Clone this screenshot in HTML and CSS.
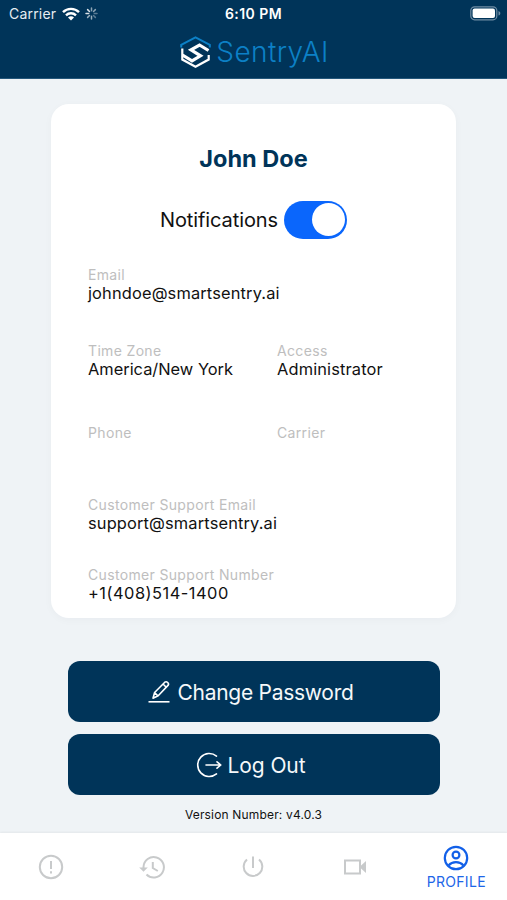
FILE: index.html
```html
<!DOCTYPE html>
<html lang="en">
<head>
<meta charset="utf-8">
<title>Profile</title>
<link rel="stylesheet" href="styles.css">
</head>
<body>
<header class="header">
  <div class="status">
    <div class="status-left">
      <span class="carrier">Carrier</span>
      <svg class="wifi" width="18" height="14" viewBox="0 0 18 14" fill="none" stroke="#fff" stroke-width="2.4"><path d="M1 5.200C5.400.7 12.600.7 17 5.200M4 8.300c2.800-2.700 7.200-2.700 10 0"/><path d="M9 13.500l-3-3.100c1.700-1.500 4.300-1.500 6 0z" fill="#fff" stroke="none"/></svg>
      <svg class="spinner" width="13" height="13" viewBox="-6.5 -6.5 13 13" stroke="#fff" stroke-width="1.5" stroke-linecap="round"><path opacity=".55" d="M0-2.800V-5.500M2-2l1.900-1.900"/><path opacity=".35" d="M2.800 0h2.700M2 2l1.900 1.900"/><path opacity=".6" d="M0 2.800v2.700M-2 2l-1.900 1.900"/><path opacity=".85" d="M-2.800 0h-2.700M-2-2l-1.900-1.900"/></svg>
    </div>
    <span class="time">6:10 PM</span>
    <div class="status-right">
      <svg width="31" height="15" viewBox="0 0 31 15"><rect x=".8" y=".8" width="26" height="13" rx="3.8" fill="none" stroke="#6f8ca4" stroke-width="1.2"/><rect x="2.6" y="2.6" width="22.4" height="9.4" rx="2" fill="#fff"/><path d="M28.500 5c2.400.8 2.400 3.800 0 4.600z" fill="#6f8ca4"/></svg>
    </div>
  </div>
  <div class="brand">
    <svg width="31" height="33" viewBox="0 0 31 33" fill="none"><path d="M2.300 12.500V23.500l13.200 7.300 13.200-7.300V19" stroke="#fff" stroke-width="2.200"/><path d="M1.200 11.500V8.800L15.500 1.300l14.300 7.500v2.700" stroke="#0c80c6" stroke-width="2"/><path d="M28.500 14.500L19.500 9 11 13.800l9.500 6L12 24.800 2.500 19" stroke="#fff" stroke-width="3.200"/></svg>
    <span class="brand-name">SentryAI</span>
  </div>
</header>
<main class="main">
  <section class="card">
    <h1 class="name">John Doe</h1>
    <div class="notify"><span class="notify-label">Notifications</span><span class="toggle"><span class="knob"></span></span></div>
    <dl class="fields">
      <div class="field wide"><dt>Email</dt><dd>johndoe@smartsentry.ai</dd></div>
      <div class="field"><dt>Time Zone</dt><dd class="zone">America/New York</dd></div>
      <div class="field"><dt>Access</dt><dd>Administrator</dd></div>
      <div class="field"><dt>Phone</dt></div>
      <div class="field"><dt>Carrier</dt></div>
      <div class="field wide"><dt>Customer Support Email</dt><dd>support@smartsentry.ai</dd></div>
      <div class="field wide"><dt>Customer Support Number</dt><dd class="number">+1(408)514-1400</dd></div>
    </dl>
  </section>
  <div class="actions">
    <button class="btn"><svg width="24" height="24" viewBox="0 0 24 24" fill="none" stroke="#fff" stroke-width="1.600" stroke-linejoin="round"><path d="M1.500 21.800h21" stroke-width="1.600"/><path d="M6 18.200l1.600-5.700L17.800 2.200q1.400-1.100 2.900.3t.3 2.900L11.200 15.800zM16.300 4.200l2.900 3M7.800 12.800l3 3"/></svg><span class="change">Change Password</span></button>
    <button class="btn"><svg width="26" height="26" viewBox="0 0 26 26" fill="none" stroke="#fff" stroke-width="1.600" stroke-linecap="round" stroke-linejoin="round"><path d="M20.500 4.100A11.500 11.500 0 1 0 20.500 21.900M10 13h14M21 9.800L24.800 13 21 16.200"/></svg><span class="logout">Log Out</span></button>
  </div>
  <p class="version">Version Number: v4.0.3</p>
</main>
<nav class="tabs">
  <a class="tab"><svg width="26" height="26" viewBox="0 0 26 26" fill="none" stroke="#c8cacb" stroke-width="2"><circle cx="13" cy="13" r="11.200"/><path d="M13 7v8M13 17.300v2.200"/></svg></a>
  <a class="tab"><svg width="26" height="26" viewBox="0 0 26 26" fill="none" stroke="#c8cacb" stroke-width="2"><path d="M4.500 14.500V13A10.200 10.200 0 1 1 7.500 20.500M13.800 8v6l5 3"/><path d="M.2 13.500h8.600l-4.300 4.300z" fill="#c8cacb" stroke="none"/></svg></a>
  <a class="tab"><svg width="26" height="26" viewBox="0 0 26 26" fill="none" stroke="#c8cacb" stroke-width="2"><path d="M13 2.500v11.500M7 5.500a9.300 9.300 0 1 0 12 0"/></svg></a>
  <a class="tab"><svg width="26" height="26" viewBox="0 0 26 26" fill="none" stroke="#c8cacb" stroke-width="2"><path d="M3 6.500h15v13H3z"/><path d="M18.500 12L24 7v12l-5.500-5z" fill="#c8cacb" stroke="none"/></svg></a>
  <a class="tab active"><svg width="26" height="26" viewBox="0 0 26 26" fill="none" stroke="#1260e8" stroke-width="2.200"><circle cx="13" cy="13" r="11.200"/><circle cx="13" cy="10" r="3.400"/><path d="M5.500 20.500c3.800-4.400 11.200-4.400 15 0"/></svg><span>PROFILE</span></a>
</nav>
</body>
</html>
```
FILE: styles.css
```css
* { box-sizing: border-box; }
body { margin: 0; width: 507px; height: 900px; display: flex; flex-direction: column; background: #eff3f6; font-family: Inter, "Liberation Sans", sans-serif; color: #111; overflow: hidden; }
svg { display: block; flex: none; }
.header { height: 79px; background: #003459; color: #fff; border-bottom: 1px solid #24577b; }
.status { height: 27px; display: grid; grid-template-columns: 1fr auto 1fr; align-items: center; padding: 0 6px 0 9px; }
.status-left { display: flex; align-items: center; }
.carrier { font-size: 14px; letter-spacing: .2px; color: #e6edf2; }
.wifi { margin-left: 6px; }
.spinner { margin-left: 5px; }
.time { font-size: 14px; font-weight: 600; letter-spacing: .45px; margin-right: 3px; }
.status-right { display: flex; justify-content: flex-end; }
.brand { display: flex; align-items: center; justify-content: center; gap: 5px; height: 50px; padding-left: 2px; }
.brand-name { font-size: 28px; line-height: 34px; font-weight: 300; letter-spacing: .4px; color: #0c80c6; }
.main { height: 754px; flex: none; padding-top: 25px; }
.card { width: 405px; height: 514px; margin: 0 auto; border-radius: 18px; background: #fff; box-shadow: 0 2px 8px rgba(0, 40, 70, .03); overflow: hidden; }
.name { margin: 41px 0 0; text-align: center; font-size: 23.500px; line-height: 28px; font-weight: 700; color: #003459; }
.notify { display: flex; align-items: center; justify-content: center; gap: 6px; height: 38px; margin-top: 27.500px; }
.notify-label { font-size: 20px; letter-spacing: -.1px; }
.toggle { width: 63px; height: 38px; padding: 2.500px; border-radius: 19px; background: #0a66fc; display: flex; justify-content: flex-end; }
.knob { width: 33px; height: 33px; border-radius: 50%; background: #fff; }
.fields { margin: 28.500px 0 0 37px; display: grid; grid-template-columns: 189px 1fr; grid-template-rows: 75.500px 82px 72px 70px 50px; }
.wide { grid-column: 1 / -1; }
dt { font-size: 14px; line-height: 16px; color: #bebebe; letter-spacing: .34px; }
dd { margin: 0; font-size: 16.400px; line-height: 20px; letter-spacing: .15px; white-space: nowrap; }
.zone { letter-spacing: 0; }
.number { letter-spacing: .5px; }
.actions { display: flex; flex-direction: column; gap: 12px; width: 372px; margin: 43px auto 0; }
.btn { height: 61px; border: 0; border-radius: 12px; background: #003459; color: #f5f8fa; font: 400 21px Inter, sans-serif; display: flex; align-items: center; justify-content: center; gap: 6px; padding: 1px 6px 0 0; }
.change { letter-spacing: -.27px; }
.logout { letter-spacing: -.1px; }
.version { margin: 12px 0 0; text-align: center; font-size: 12px; line-height: 16px; letter-spacing: .17px; }
.tabs { height: 67px; flex: none; background: #fff; display: grid; grid-template-columns: repeat(5, 1fr); box-shadow: 0 -1px 2px rgba(0, 0, 0, .05); }
.tab { display: flex; flex-direction: column; align-items: center; padding-top: 21px; }
.tab.active { padding-top: 12px; color: #1d66e8; font-size: 14px; line-height: 18px; letter-spacing: .3px; }
.tab.active span { margin-top: 2px; }
```
